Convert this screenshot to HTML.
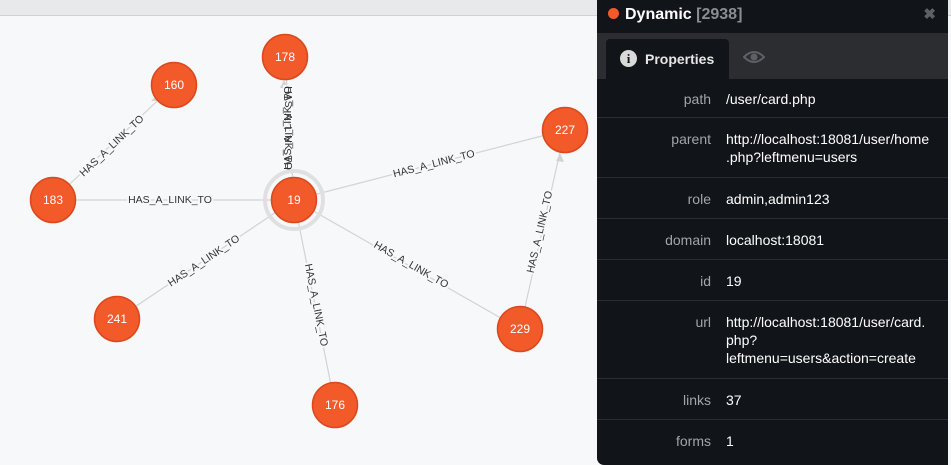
<!DOCTYPE html>
<html><head><meta charset="utf-8"><style>
*{margin:0;padding:0;box-sizing:border-box}
body{width:951px;height:465px;overflow:hidden;background:#f7f8fa;font-family:"Liberation Sans",Arial,sans-serif;position:relative}
.top{position:absolute;left:0;top:0;width:951px;height:16px;background:#e8e9eb;border-bottom:1px solid #cfd1d6}
.graph{position:absolute;left:0;top:0}
.panel{position:absolute;left:597px;top:0;width:351px;height:465px;background:#111418;border-radius:0 0 0 7px;color:#fff;overflow:hidden}
.hdr{height:33px;padding:6px 0 0 11px;font-size:16px;font-weight:bold}
.dot{display:inline-block;width:11px;height:11px;border-radius:50%;background:#f25a29;margin-right:6px;vertical-align:0}
.hdr .n{color:#8a8d92}
.x{position:absolute;right:12px;top:5px;color:#5d6166;font-size:15px;font-weight:bold}
.tabs{height:46px;background:#2b2d31;position:relative}
.tab{position:absolute;left:9px;top:6px;width:123px;height:40px;background:#111418;border-radius:4px 4px 0 0;font-size:14px;font-weight:bold;color:#e6e6e6;padding:12px 0 0 39px}
.info{position:absolute;left:14px;top:11px;width:17px;height:17px;border-radius:50%;background:#d9d9d9;color:#111418;font-family:"Liberation Serif",serif;font-size:13px;font-weight:bold;text-align:center;line-height:17px}
.eye{position:absolute;left:146px;top:17px}
.row{display:flex;border-bottom:1px solid #2a2d33;font-size:14px;line-height:18px}
.k{width:129px;flex:none;text-align:right;color:#a2a5aa;padding-right:15px}
.v{width:222px;color:#fff}
</style></head><body>
<div class="top"></div>
<svg class="graph" width="597" height="465" font-family="Liberation Sans, Arial, sans-serif">
<g stroke="#d3d3d3" stroke-width="1.2">
<line x1="53" y1="200" x2="174" y2="85"/>
<line x1="53" y1="200" x2="294" y2="200"/>
<line x1="294" y1="200" x2="285" y2="57"/>
<line x1="294" y1="200" x2="565" y2="130"/>
<line x1="294" y1="200" x2="117" y2="319"/>
<line x1="294" y1="200" x2="520" y2="329"/>
<line x1="294" y1="200" x2="335" y2="405"/>
<line x1="520" y1="329" x2="565" y2="130"/>
</g>
<g fill="#d3d3d3">
<polygon points="157,101 151,101 156,96"/>
<polygon points="284,80 280,88 288,88"/>
<polygon points="560,153 556,161 564,162"/>
</g>
<g font-size="10.5" fill="#333" text-anchor="middle" stroke="#f7f8fa" stroke-width="4" paint-order="stroke">
<text transform="translate(112,146) rotate(-43.5)" dy="3">HAS_A_LINK_TO</text>
<text transform="translate(170,200)" dy="3">HAS_A_LINK_TO</text>
<text transform="translate(288,128) rotate(90)" dy="3">HAS_A_LINK_TO</text>
<text transform="translate(288,128) rotate(-90)" dy="3" stroke="none">HAS_A_LINK_TO</text>
<text transform="translate(434,164) rotate(-14.5)" dy="3">HAS_A_LINK_TO</text>
<text transform="translate(204,261) rotate(-34)" dy="3">HAS_A_LINK_TO</text>
<text transform="translate(411,265) rotate(29.7)" dy="3">HAS_A_LINK_TO</text>
<text transform="translate(316,305) rotate(78.7)" dy="3">HAS_A_LINK_TO</text>
<text transform="translate(540,232) rotate(-77)" dy="3">HAS_A_LINK_TO</text>
</g>
<circle cx="294" cy="200" r="29" fill="none" stroke="#e0e0e0" stroke-width="4"/>
<g fill="#f25a29" stroke="#d9481e" stroke-width="1.5">
<circle cx="285" cy="57" r="22.5"/><circle cx="174" cy="85" r="22.5"/>
<circle cx="565" cy="130" r="22.5"/><circle cx="53" cy="200" r="22.5"/>
<circle cx="294" cy="200" r="22.5"/><circle cx="117" cy="319" r="22.5"/>
<circle cx="520" cy="329" r="22.5"/><circle cx="335" cy="405" r="22.5"/>
</g>
<g font-size="12" fill="#fff" text-anchor="middle">
<text x="285" y="61">178</text><text x="174" y="89">160</text>
<text x="565" y="134">227</text><text x="53" y="204">183</text>
<text x="294" y="204">19</text><text x="117" y="323">241</text>
<text x="520" y="333">229</text><text x="335" y="409">176</text>
</g>
</svg>
<div class="panel">
<div class="hdr"><span class="dot"></span>Dynamic <span class="n">[2938]</span></div>
<div class="x">✖</div>
<div class="tabs">
<div class="tab"><span class="info">i</span>Properties</div>
<svg class="eye" width="22" height="14" viewBox="0 0 22 14"><path d="M1 7 Q11 -3 21 7 Q11 17 1 7Z" fill="none" stroke="#5d6166" stroke-width="2"/><circle cx="11" cy="7" r="3.5" fill="#5d6166"/></svg>
</div>
<div class="row" style="height:39px;padding-top:11px"><div class="k">path</div><div class="v">/user/card.php</div></div>
<div class="row" style="height:60px;padding-top:12px"><div class="k">parent</div><div class="v">http://localhost:18081/user/home<br>.php?leftmenu=users</div></div>
<div class="row" style="height:41px;padding-top:12px"><div class="k">role</div><div class="v">admin,admin123</div></div>
<div class="row" style="height:41px;padding-top:12px"><div class="k">domain</div><div class="v">localhost:18081</div></div>
<div class="row" style="height:41px;padding-top:12px"><div class="k">id</div><div class="v">19</div></div>
<div class="row" style="height:78px;padding-top:12px"><div class="k">url</div><div class="v">http://localhost:18081/user/card.<br>php?<br>leftmenu=users&amp;action=create</div></div>
<div class="row" style="height:41px;padding-top:12px"><div class="k">links</div><div class="v">37</div></div>
<div class="row" style="height:41px;padding-top:12px;border:none"><div class="k">forms</div><div class="v">1</div></div>
</div>
</body></html>
